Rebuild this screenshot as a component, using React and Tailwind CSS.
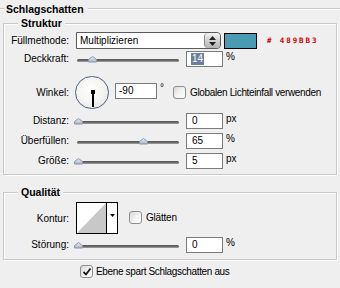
import React from "react";

const LINE = "h-0 border-t border-t-[#c8c8c8] border-b border-b-white";

function Slider({ value }) {
  return (
    <div className="relative w-[108px] h-[16px] shrink-0">
      <div className="absolute left-[3px] right-[3px] top-[8px] h-[3px] rounded-full bg-gradient-to-b from-[#555555] via-[#6a6a6a] to-[#a8a8a8]" />
      <svg
        className="absolute top-[5px]"
        style={{ left: `${value}px` }}
        width="9"
        height="7"
        viewBox="0 0 9 7"
      >
        <defs>
          <linearGradient id="thumbg" x1="0" y1="0" x2="0" y2="1">
            <stop offset="0" stopColor="#eef1f6" />
            <stop offset="1" stopColor="#a9b3c4" />
          </linearGradient>
        </defs>
        <path d="M0.5 6 L0.5 3.5 L4.5 0.5 L8.5 3.5 L8.5 6 Z" fill="url(#thumbg)" stroke="#8894a8" strokeWidth="1" />
      </svg>
    </div>
  );
}

function NumBox({ children, w = "w-[37px]", pl = "pl-[5px]" }) {
  return (
    <div className={`${w} h-[16px] shrink-0 border border-[#7b7b7b] bg-white flex items-center ${pl} leading-none`}>
      {children}
    </div>
  );
}

function Checkbox({ checked }) {
  return (
    <div className="w-[13px] h-[13px] shrink-0 rounded-[3px] border border-[#8e8e8e] bg-gradient-to-br from-[#d8d8d8] via-[#f2f2f2] to-white flex items-center justify-center">
      {checked && (
        <svg width="10" height="10" viewBox="0 0 10 10">
          <path d="M1.5 5 L4 7.5 L8.5 1.5" fill="none" stroke="#1a1a1a" strokeWidth="1.8" />
        </svg>
      )}
    </div>
  );
}

function SliderRow({ label, value, shown, unit }) {
  return (
    <div className="flex items-start h-[16px]">
      <div className="w-[65px] text-right leading-[16px] mr-[5px] shrink-0">{label}</div>
      <Slider value={value} />
      <div className="ml-[4px]">
        <NumBox>{shown}</NumBox>
      </div>
      <div className="ml-[3px] leading-[12px]">{unit}</div>
    </div>
  );
}

export default function App() {
  return (
    <div className="w-[340px] h-[288px] overflow-hidden bg-[#efefef] text-black text-[10px] font-['Liberation_Sans',Arial,sans-serif] pt-[2px]">
      {/* outer header */}
      <div className="flex items-center h-[14px]">
        <div className={`w-[4px] ${LINE}`} />
        <div className="font-bold text-[10.5px] leading-[12px] px-[2px]">Schlagschatten</div>
        <div className={`flex-1 ml-[2px] ${LINE}`} />
      </div>

      {/* Struktur */}
      <fieldset className="mx-[3px] mt-[1px] border border-[#c8c8c8] shadow-[inset_1px_1px_0_#fff,1px_1px_0_#fff] px-0 pt-[3px] pb-[5px]">
        <legend className="ml-[14px] px-[3px] font-bold text-[10.5px] leading-[12px] bg-[#efefef]">Struktur</legend>

        <div className="flex items-center h-[17px]">
          <div className="w-[65px] text-right mr-[7px] shrink-0">Füllmethode:</div>
          <div className="w-[145px] h-[17px] border border-[#5a5a5a] bg-white flex items-center shrink-0 rounded-r-[4px]">
            <div className="flex-1 pl-[3px] leading-none">Multiplizieren</div>
            <div className="w-[16px] h-full rounded-[4px] border-l border-[#8a8a8a] bg-gradient-to-b from-[#f4f4f4] via-[#d2d2d2] to-[#b4b4b4] flex flex-col items-center justify-center gap-[2px]">
              <svg width="7" height="4" viewBox="0 0 7 4"><path d="M0 4 L3.5 0 L7 4 Z" fill="#222" /></svg>
              <svg width="7" height="4" viewBox="0 0 7 4"><path d="M0 0 L3.5 4 L7 0 Z" fill="#222" /></svg>
            </div>
          </div>
          <div className="ml-[3px] w-[33px] h-[16px] border border-black bg-[#489bb3] shrink-0" />
          <div className="ml-[10px] text-[7.5px] font-bold tracking-[1.9px] text-[#d00000] font-['DejaVu_Sans_Mono',monospace] leading-none">
            # 489BB3
          </div>
        </div>

        <div className="mt-[2px] flex items-start h-[16px]">
          <div className="w-[65px] text-right leading-[16px] mr-[5px] shrink-0">Deckkraft:</div>
          <Slider value={14} />
          <div className="ml-[4px]">
            <NumBox>
              <span className="bg-[#6d7e9c] text-white px-[1px] -ml-[1px] leading-[12px]">14</span>
            </NumBox>
          </div>
          <div className="ml-[3px] leading-[12px]">%</div>
        </div>

        <div className="mt-[9px] flex items-start h-[33px]">
          <div className="w-[65px] text-right leading-[33px] mr-[6px] shrink-0">Winkel:</div>
          <div className="w-[34px] h-[33px] rounded-full border-[1.5px] border-[#4e5f84] bg-[radial-gradient(circle_at_45%_40%,#ffffff_0%,#f3f3f0_55%,#d6d6d6_100%)] flex items-start justify-center shrink-0 overflow-hidden">
            <svg width="31" height="30" viewBox="0 0 31 30">
              <rect x="14" y="13" width="4" height="4" fill="#000" />
              <rect x="15" y="15" width="2" height="16" fill="#000" />
            </svg>
          </div>
          <div className="ml-[6px] mt-[7px]">
            <NumBox w="w-[42px]" pl="pl-[3px]">-90</NumBox>
          </div>
          <div className="ml-[3px] mt-[6px] leading-[12px]">°</div>
          <div className="ml-[9px] mt-[10px] flex items-center">
            <Checkbox />
            <div className="ml-[4px] leading-[12px] tracking-[-0.35px]">Globalen Lichteinfall verwenden</div>
          </div>
        </div>

        <div className="mt-[4px] flex flex-col gap-[4px]">
          <SliderRow label="Distanz:" value={0} shown="0" unit="px" />
          <SliderRow label="Überfüllen:" value={65} shown="65" unit="%" />
          <SliderRow label="Größe:" value={0} shown="5" unit="px" />
        </div>
      </fieldset>

      {/* Qualität */}
      <fieldset className="mx-[3px] mt-[11px] border border-[#c8c8c8] shadow-[inset_1px_1px_0_#fff,1px_1px_0_#fff] px-0 pt-[4px] pb-[6px]">
        <legend className="ml-[14px] px-[3px] font-bold text-[10.5px] leading-[12px] bg-[#efefef]">Qualität</legend>

        <div className="flex items-center h-[32px]">
          <div className="w-[65px] text-right mr-[7px] shrink-0">Kontur:</div>
          <div className="w-[42px] h-[32px] border border-black bg-white flex shrink-0">
            <svg width="29" height="30" viewBox="0 0 29 30" className="shrink-0">
              <path d="M0 30 L29 0 L29 30 Z" fill="#c8c8c8" />
            </svg>
            <div className="flex-1 border-l border-black flex items-start justify-center pt-[11px]">
              <svg width="5" height="3" viewBox="0 0 5 3"><path d="M0 0 L5 0 L2.5 3 Z" fill="#000" /></svg>
            </div>
          </div>
          <div className="ml-[11px] flex items-center -mt-[2px]">
            <Checkbox />
            <div className="ml-[4px] tracking-[-0.2px]">Glätten</div>
          </div>
        </div>

        <div className="mt-[3px]">
          <SliderRow label="Störung:" value={0} shown="0" unit="%" />
        </div>
      </fieldset>

      <div className="mt-[5px] ml-[80px] flex items-center h-[13px]">
        <Checkbox checked />
        <div className="ml-[3px] tracking-[-0.35px]">Ebene spart Schlagschatten aus</div>
      </div>
    </div>
  );
}
